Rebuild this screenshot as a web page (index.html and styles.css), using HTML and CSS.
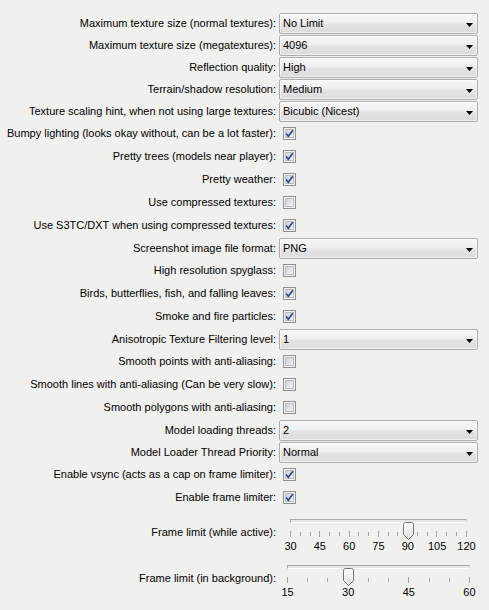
FILE: index.html
```html
<!DOCTYPE html>
<html>
<head>
<meta charset="utf-8">
<link rel="stylesheet" href="styles.css">
</head>
<body>
<svg class="defs" width="0" height="0" aria-hidden="true">
  <defs>
    <linearGradient id="cbg" x1="0" y1="0" x2="1" y2="1">
      <stop offset="0" stop-color="#cdd0d5"/>
      <stop offset="1" stop-color="#f5f5f5"/>
    </linearGradient>
    <linearGradient id="hg" x1="0" y1="0" x2="0" y2="1">
      <stop offset="0" stop-color="#fefefe"/>
      <stop offset="0.55" stop-color="#ececec"/>
      <stop offset="1" stop-color="#d6d6d6"/>
    </linearGradient>
    <symbol id="box" viewBox="0 0 13 13">
      <rect x="0.5" y="0.5" width="12" height="12" fill="#f4f4f4" stroke="#8f8f8f"/>
      <rect x="2.5" y="2.5" width="8" height="8" fill="url(#cbg)" stroke="#b9bcc1"/>
    </symbol>
    <symbol id="tick" viewBox="0 0 13 13">
      <path d="M3.2 6.6 L5.3 9.3 L9.8 3.2" fill="none" stroke="#2f4c8e" stroke-width="1.7" stroke-linejoin="miter"/>
    </symbol>
    <symbol id="knob" viewBox="0 0 11 18">
      <path d="M0.5 2.5 Q0.5 0.5 2.5 0.5 H8.5 Q10.5 0.5 10.5 2.5 V12.5 L5.5 17.5 L0.5 12.5 Z" fill="url(#hg)" stroke="#707070"/>
      <path d="M1.5 2.8 Q1.5 1.5 2.8 1.5 H8.2 Q9.5 1.5 9.5 2.8 V12.1 L5.5 16.1 L1.5 12.1 Z" fill="none" stroke="#ffffff" stroke-opacity="0.7"/>
    </symbol>
  </defs>
</svg>

<div class="form">
  <div class="row"><span class="lbl">Maximum texture size (normal textures):</span><div class="combo"><span>No Limit</span><svg class="arrow" width="7" height="4" viewBox="0 0 7 4"><polygon points="0,0 7,0 3.5,4" fill="#000"/></svg></div></div>
  <div class="row"><span class="lbl">Maximum texture size (megatextures):</span><div class="combo"><span>4096</span><svg class="arrow" width="7" height="4" viewBox="0 0 7 4"><polygon points="0,0 7,0 3.5,4" fill="#000"/></svg></div></div>
  <div class="row"><span class="lbl">Reflection quality:</span><div class="combo"><span>High</span><svg class="arrow" width="7" height="4" viewBox="0 0 7 4"><polygon points="0,0 7,0 3.5,4" fill="#000"/></svg></div></div>
  <div class="row"><span class="lbl">Terrain/shadow resolution:</span><div class="combo"><span>Medium</span><svg class="arrow" width="7" height="4" viewBox="0 0 7 4"><polygon points="0,0 7,0 3.5,4" fill="#000"/></svg></div></div>
  <div class="row"><span class="lbl">Texture scaling hint, when not using large textures:</span><div class="combo"><span>Bicubic (Nicest)</span><svg class="arrow" width="7" height="4" viewBox="0 0 7 4"><polygon points="0,0 7,0 3.5,4" fill="#000"/></svg></div></div>

  <div class="row cb"><span class="lbl">Bumpy lighting (looks okay without, can be a lot faster):</span><div class="field"><svg class="check" width="13" height="13"><use href="#box"/><use href="#tick"/></svg></div></div>
  <div class="row cb"><span class="lbl">Pretty trees (models near player):</span><div class="field"><svg class="check" width="13" height="13"><use href="#box"/><use href="#tick"/></svg></div></div>
  <div class="row cb"><span class="lbl">Pretty weather:</span><div class="field"><svg class="check" width="13" height="13"><use href="#box"/><use href="#tick"/></svg></div></div>
  <div class="row cb"><span class="lbl">Use compressed textures:</span><div class="field"><svg class="check" width="13" height="13"><use href="#box"/></svg></div></div>
  <div class="row cb"><span class="lbl">Use S3TC/DXT when using compressed textures:</span><div class="field"><svg class="check" width="13" height="13"><use href="#box"/><use href="#tick"/></svg></div></div>

  <div class="row"><span class="lbl">Screenshot image file format:</span><div class="combo"><span>PNG</span><svg class="arrow" width="7" height="4" viewBox="0 0 7 4"><polygon points="0,0 7,0 3.5,4" fill="#000"/></svg></div></div>

  <div class="row cb"><span class="lbl">High resolution spyglass:</span><div class="field"><svg class="check" width="13" height="13"><use href="#box"/></svg></div></div>
  <div class="row cb"><span class="lbl">Birds, butterflies, fish, and falling leaves:</span><div class="field"><svg class="check" width="13" height="13"><use href="#box"/><use href="#tick"/></svg></div></div>
  <div class="row cb"><span class="lbl">Smoke and fire particles:</span><div class="field"><svg class="check" width="13" height="13"><use href="#box"/><use href="#tick"/></svg></div></div>

  <div class="row"><span class="lbl">Anisotropic Texture Filtering level:</span><div class="combo"><span>1</span><svg class="arrow" width="7" height="4" viewBox="0 0 7 4"><polygon points="0,0 7,0 3.5,4" fill="#000"/></svg></div></div>

  <div class="row cb"><span class="lbl">Smooth points with anti-aliasing:</span><div class="field"><svg class="check" width="13" height="13"><use href="#box"/></svg></div></div>
  <div class="row cb"><span class="lbl">Smooth lines with anti-aliasing (Can be very slow):</span><div class="field"><svg class="check" width="13" height="13"><use href="#box"/></svg></div></div>
  <div class="row cb"><span class="lbl">Smooth polygons with anti-aliasing:</span><div class="field"><svg class="check" width="13" height="13"><use href="#box"/></svg></div></div>

  <div class="row"><span class="lbl">Model loading threads:</span><div class="combo"><span>2</span><svg class="arrow" width="7" height="4" viewBox="0 0 7 4"><polygon points="0,0 7,0 3.5,4" fill="#000"/></svg></div></div>
  <div class="row"><span class="lbl">Model Loader Thread Priority:</span><div class="combo"><span>Normal</span><svg class="arrow" width="7" height="4" viewBox="0 0 7 4"><polygon points="0,0 7,0 3.5,4" fill="#000"/></svg></div></div>

  <div class="row cb"><span class="lbl">Enable vsync (acts as a cap on frame limiter):</span><div class="field"><svg class="check" width="13" height="13"><use href="#box"/><use href="#tick"/></svg></div></div>
  <div class="row cb"><span class="lbl">Enable frame limiter:</span><div class="field"><svg class="check" width="13" height="13"><use href="#box"/><use href="#tick"/></svg></div></div>

  <div class="row sl"><span class="lbl">Frame limit (while active):</span>
    <div class="slider wide">
      <div class="track">
        <div class="groove"></div>
        <svg class="knob" width="11" height="18" style="left: calc(66.667% - 5px)"><use href="#knob"/></svg>
        <div class="ticks">
          <i class="t big"></i><i class="t"></i><i class="t"></i><i class="t big"></i><i class="t"></i><i class="t"></i><i class="t big"></i><i class="t"></i><i class="t"></i><i class="t big"></i><i class="t"></i><i class="t"></i><i class="t big"></i><i class="t"></i><i class="t"></i><i class="t big"></i><i class="t"></i><i class="t"></i><i class="t big"></i>
        </div>
        <div class="nums"><b>30</b><b>45</b><b>60</b><b>75</b><b>90</b><b>105</b><b>120</b></div>
      </div>
    </div>
  </div>
  <div class="row sl"><span class="lbl">Frame limit (in background):</span>
    <div class="slider narrow">
      <div class="track">
        <div class="groove"></div>
        <svg class="knob" width="11" height="18" style="left: calc(33.333% - 5px)"><use href="#knob"/></svg>
        <div class="ticks">
          <i class="t big"></i><i class="t"></i><i class="t"></i><i class="t big"></i><i class="t"></i><i class="t"></i><i class="t big"></i><i class="t"></i><i class="t"></i><i class="t big"></i>
        </div>
        <div class="nums"><b>15</b><b>30</b><b>45</b><b>60</b></div>
      </div>
    </div>
  </div>
</div>
</body>
</html>
```

FILE: styles.css
```css
html, body {
  margin: 0;
  padding: 0;
  background: #f0f0ee;
}
body {
  font-family: "Liberation Sans", Arial, sans-serif;
  font-size: 11px;
  color: #000;
  width: 489px;
  height: 610px;
  overflow: hidden;
}
.defs {
  position: absolute;
  width: 0;
  height: 0;
  overflow: hidden;
}
.form {
  padding: 12px 11px 0 0;
  display: flex;
  flex-direction: column;
}
.row {
  display: grid;
  grid-template-columns: 1fr 199px;
  column-gap: 3px;
  align-items: center;
  height: 22px;
}
.row.cb {
  height: 23px;
}
.row.sl {
  height: 46px;
}
.lbl {
  text-align: right;
  white-space: nowrap;
  line-height: 13px;
}
.combo {
  box-sizing: border-box;
  height: 21px;
  border: 1px solid #acacac;
  border-radius: 2px;
  background: linear-gradient(#f7f7f7 0%, #eeeeee 48%, #e4e4e4 52%, #dcdcdc 100%);
  box-shadow: inset 0 0 0 1px rgba(255,255,255,0.6);
  display: flex;
  align-items: center;
  justify-content: space-between;
  padding: 0 4px 0 3px;
  line-height: 13px;
}
.arrow {
  margin-top: 4px;
  flex: none;
}
.field {
  display: flex;
  align-items: center;
  height: 23px;
}
.check {
  margin-left: 4px;
  display: block;
}
.slider {
  height: 46px;
}
.slider.wide .track {
  margin: 0 11px;
}
.slider.narrow .track {
  margin: 0 8px;
}
.track {
  position: relative;
}
.groove {
  box-sizing: border-box;
  height: 4px;
  margin-top: 10px;
  border: 1px solid #a8a8a8;
  border-right-color: #dcdcdc;
  border-bottom-color: #ffffff;
  background: #e6e7e7;
}
.knob {
  position: absolute;
  top: 3px;
  display: block;
}
.ticks {
  display: flex;
  justify-content: space-between;
  align-items: flex-start;
  margin-top: 8px;
  height: 6px;
}
.t {
  display: block;
  width: 1px;
  height: 4px;
  margin-top: 1px;
  background: #a0a0a0;
}
.t.big {
  height: 6px;
  margin-top: 0;
}
.nums {
  display: flex;
  justify-content: space-between;
  margin-top: 3px;
  line-height: 13px;
}
.nums b {
  font-weight: normal;
  width: 1px;
  display: flex;
  justify-content: center;
  white-space: nowrap;
}
```
